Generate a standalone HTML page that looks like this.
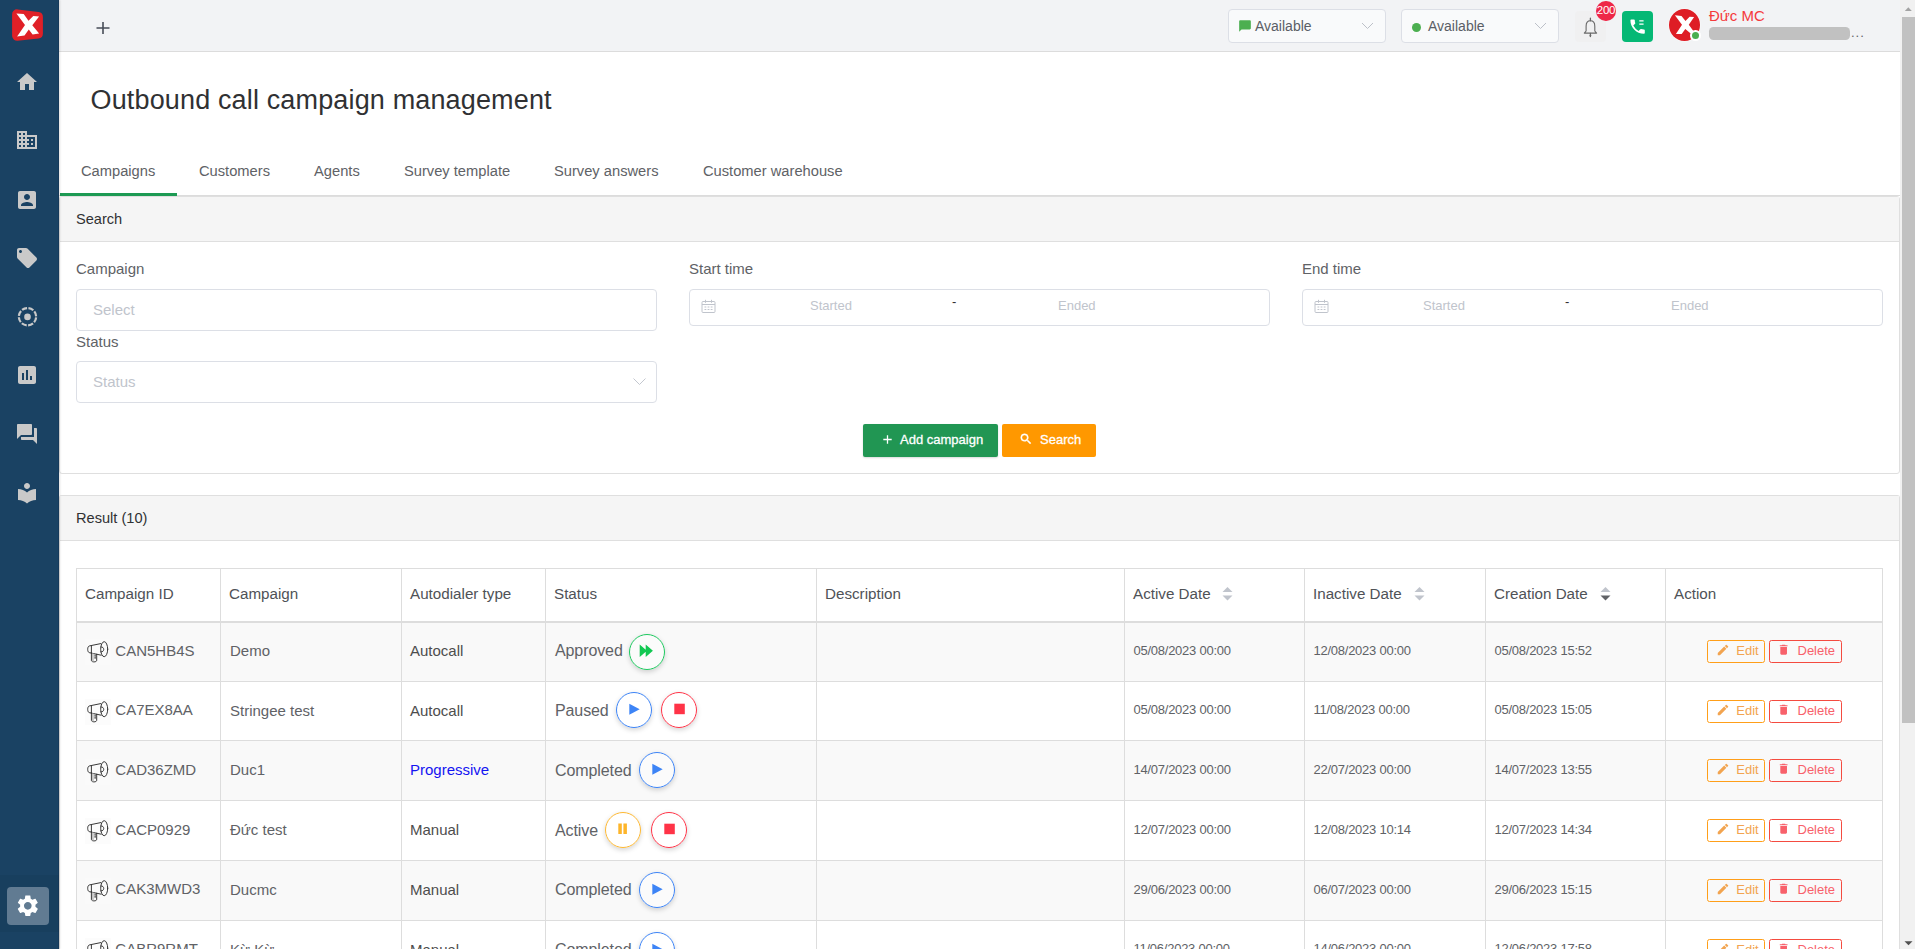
<!DOCTYPE html>
<html><head><meta charset="utf-8">
<style>
*{box-sizing:border-box;margin:0;padding:0}
html,body{width:1915px;height:949px;overflow:hidden;background:#fff;font-family:"Liberation Sans",sans-serif;color:#606266}
.abs{position:absolute}
#side{position:absolute;left:0;top:0;width:59px;height:949px;background:#1a4263;border-right:1px solid #163a5b;box-shadow:1px 0 2px rgba(0,0,0,.13);z-index:5}
#side svg.ic{position:absolute;left:15px;width:24px;height:24px;fill:#c9c9c9}
#top{position:absolute;left:59px;top:0;width:1841px;height:52px;background:#f2f3f5;border-bottom:1px solid #dcdcdc}
.sel{position:absolute;top:9px;height:34px;width:158px;border:1px solid #dcdfe6;border-radius:4px;background:#f9fafb;font-size:14px;color:#5a5e66}
h1{position:absolute;left:90.5px;top:83.5px;font-size:27px;letter-spacing:.15px;font-weight:400;color:#303133;line-height:32px;white-space:nowrap}
.tab{position:absolute;top:162px;font-size:14.7px;line-height:18px;color:#606266;white-space:nowrap}
.card{position:absolute;left:59px;width:1841px;border:1px solid #dfdfdf;border-radius:3px;background:#fff}
.chead{position:absolute;left:0;top:0;right:0;height:45px;background:#f5f5f5;border-bottom:1px solid #dfdfdf;font-size:14.600px;color:#303133;line-height:44px;padding-left:16px}
.lbl{position:absolute;font-size:15px;line-height:18px;color:#606266;white-space:nowrap}
.inp{position:absolute;border:1px solid #dcdfe6;border-radius:4px;background:#fff;font-size:15px;color:#c0c4cc}
.th{position:absolute;top:584px;font-size:15.200px;line-height:20px;color:#4f5257;white-space:nowrap}
.td{position:absolute;font-size:15px;line-height:20px;color:#606266;white-space:nowrap}
.cb{position:absolute;width:36px;height:36px;border-radius:50%;border:1px solid;background:rgba(255,255,255,.35);box-shadow:0 2px 5px rgba(0,0,0,.17)}
.eb{position:absolute;height:23px;border:1px solid;border-radius:2.500px;font-size:13px;line-height:16px;white-space:nowrap}
</style></head><body>
<div id="side">
<svg class="abs" style="left:12px;top:9px" width="32" height="33" viewBox="0 0 32 33"><path d="M5.10 5.35L25.90 7.91L25.90 24.44L5.10 26.80Z" fill="#e02027" stroke="#e02027" stroke-width="10.0" stroke-linejoin="round"/><path d="M4.400 4.400L11.700 5.100L16.500 11.700L21.300 6.900L27.100 7.400L20.300 16.300L27.100 24.600L20.600 25.400L16.800 20.600L12.500 26.600L5.100 27.600L13 16Z" fill="#fff"/></svg>
<svg class="ic" style="top:69.500px" viewBox="0 0 24 24"><path d="M10 20v-6h4v6h5v-8h3L12 3 2 12h3v8z"/></svg>
<svg class="ic" style="top:128.300px" viewBox="0 0 24 24"><path d="M12 7V3H2v18h20V7H12zM6 19H4v-2h2v2zm0-4H4v-2h2v2zm0-4H4V9h2v2zm0-4H4V5h2v2zm4 12H8v-2h2v2zm0-4H8v-2h2v2zm0-4H8V9h2v2zm0-4H8V5h2v2zm10 12h-8v-2h2v-2h-2v-2h2v-2h-2V9h8v10zm-2-8h-2v2h2v-2zm0 4h-2v2h2v-2z"/></svg>
<svg class="ic" style="top:187.500px" viewBox="0 0 24 24"><path d="M3 5v14c0 1.1.89 2 2 2h14c1.1 0 2-.9 2-2V5c0-1.1-.9-2-2-2H5c-1.11 0-2 .9-2 2zm12 4c0 1.66-1.34 3-3 3s-3-1.34-3-3 1.34-3 3-3 3 1.34 3 3zm-9 8c0-2 4-3.1 6-3.1s6 1.1 6 3.1v1H6v-1z"/></svg>
<svg class="ic" style="top:246px" viewBox="0 0 24 24"><path d="M21.41 11.58l-9-9C12.05 2.22 11.55 2 11 2H4c-1.1 0-2 .9-2 2v7c0 .55.22 1.05.59 1.42l9 9c.36.36.86.58 1.41.58.55 0 1.05-.22 1.41-.59l7-7c.37-.36.59-.86.59-1.41 0-.55-.23-1.06-.59-1.42zM5.5 7C4.67 7 4 6.33 4 5.5S4.67 4 5.5 4 7 4.67 7 5.5 6.33 7 5.5 7z"/></svg>
<svg class="ic" style="top:304.500px" viewBox="0 0 24 24"><circle cx="12.500" cy="11.700" r="8.650" fill="none" stroke="#c9c9c9" stroke-width="2.200" stroke-dasharray="5.350 1.443" stroke-dashoffset="6.070"/><circle cx="12.500" cy="11.900" r="3.300"/></svg>
<svg class="ic" style="top:363px" viewBox="0 0 24 24"><path d="M19 3H5c-1.1 0-2 .9-2 2v14c0 1.1.9 2 2 2h14c1.1 0 2-.9 2-2V5c0-1.1-.9-2-2-2zM9 17H7v-7h2v7zm4 0h-2V7h2v10zm4 0h-2v-4h2v4z"/></svg>
<svg class="ic" style="top:422px" viewBox="0 0 24 24"><path d="M21 6h-2v9H6v2c0 .55.45 1 1 1h11l4 4V7c0-.55-.45-1-1-1zm-4 6V3c0-.55-.45-1-1-1H3c-.55 0-1 .45-1 1v14l4-4h10c.55 0 1-.45 1-1z"/></svg>
<svg class="ic" style="top:481px" viewBox="0 0 24 24"><path d="M12 11.55C9.64 9.35 6.48 8 3 8v11c3.48 0 6.64 1.35 9 3.55 2.36-2.19 5.52-3.55 9-3.55V8c-3.48 0-6.64 1.35-9 3.55zM12 8c1.66 0 3-1.34 3-3s-1.34-3-3-3-3 1.34-3 3 1.34 3 3 3z"/></svg>
<div class="abs" style="left:0;top:875px;width:59px;height:57px;background:rgba(0,0,0,.045)"></div><div class="abs" style="left:7px;top:887px;width:42px;height:38px;border-radius:4px;background:#617b92"></div>
<svg class="ic" style="top:892.600px;left:14.900px;width:25.600px;height:25.600px;fill:#fff" viewBox="0 0 24 24"><path d="M19.14 12.94c.04-.3.06-.61.06-.94 0-.32-.02-.64-.07-.94l2.03-1.58c.18-.14.23-.41.12-.61l-1.92-3.32c-.12-.22-.37-.29-.59-.22l-2.39.96c-.5-.38-1.03-.7-1.62-.94l-.36-2.54c-.04-.24-.24-.41-.48-.41h-3.84c-.24 0-.43.17-.47.41l-.36 2.54c-.59.24-1.13.57-1.62.94l-2.39-.96c-.22-.08-.47 0-.59.22L2.74 8.87c-.12.21-.08.47.12.61l2.03 1.58c-.05.3-.09.63-.09.94s.02.64.07.94l-2.03 1.58c-.18.14-.23.41-.12.61l1.92 3.32c.12.22.37.29.59.22l2.39-.96c.5.38 1.03.7 1.62.94l.36 2.54c.05.24.24.41.48.41h3.84c.24 0 .44-.17.47-.41l.36-2.54c.59-.24 1.13-.56 1.62-.94l2.39.96c.22.08.47 0 .59-.22l1.92-3.32c.12-.22.07-.47-.12-.61l-2.01-1.58zM12 15.6c-1.98 0-3.6-1.62-3.6-3.6s1.62-3.6 3.6-3.6 3.6 1.62 3.6 3.6-1.62 3.6-3.6 3.6z"/></svg>
</div>
<div id="top">
<svg class="abs" style="left:36.600px;top:21px" width="14" height="14" viewBox="0 0 14 14"><path d="M7 1.100v12M.5 7h13" stroke="#474c57" stroke-width="1.600" fill="none"/></svg>
<div class="sel" style="left:1169px"><svg class="abs" style="left:9px;top:9px" width="14" height="14" viewBox="0 0 24 24"><path d="M20 2H4c-1.1 0-2 .9-2 2v18l4-4h14c1.1 0 2-.9 2-2V4c0-1.1-.9-2-2-2z" fill="#4caf50"/></svg><span class="abs" style="left:26px;top:7px;line-height:18px">Available</span><svg class="abs" style="left:131.700px;top:9px" width="13" height="13" viewBox="0 0 13 13"><path d="M1 4l5.500 5.500 5.500-5.500" stroke="#bcc0c8" stroke-width="1" fill="none"/></svg></div>
<div class="sel" style="left:1342px"><div class="abs" style="left:10px;top:13px;width:9px;height:9px;border-radius:50%;background:#4caf50"></div><span class="abs" style="left:26px;top:7px;line-height:18px">Available</span><svg class="abs" style="left:131.700px;top:9px" width="13" height="13" viewBox="0 0 13 13"><path d="M1 4l5.500 5.500 5.500-5.500" stroke="#bcc0c8" stroke-width="1" fill="none"/></svg></div>
<div class="abs" style="left:1516px;top:11px;width:31px;height:31px;border-radius:4px;background:#f0f0f1"></div>
<svg class="abs" style="left:1516px;top:11.500px" width="31" height="31" viewBox="0 0 31 31"><path d="M9.300 21.100L11.100 19V14.200C11.100 10.600 13 8.800 15.400 8.800S19.800 10.600 19.800 14.200V19L21.600 21.100Z" fill="none" stroke="#686868" stroke-width="1.100" stroke-linejoin="round"/><path d="M15.400 6.200v2.600M15.400 21.500v3" stroke="#686868" stroke-width="1.300" stroke-linecap="round"/><path d="M14.200 23.300h2.400l-1.200 1.600z" fill="#686868"/></svg>
<div class="abs" style="left:1537px;top:1px;width:19.500px;height:20px;border-radius:50%;background:#ee2748"></div>
<div class="abs" style="left:1536px;top:1.500px;width:22px;height:17.500px;color:#fff;font-size:11.500px;line-height:17.500px;text-align:center;letter-spacing:-.2px">200</div>
<div class="abs" style="left:1563px;top:11px;width:31px;height:31px;border-radius:4px;background:#05b875"></div>
<svg class="abs" style="left:1569.200px;top:17.400px" width="19.200" height="19.200" viewBox="0 0 24 24"><path fill="#fff" d="M20 15.500c-1.250 0-2.450-.2-3.570-.57a1.020 1.020 0 0 0-1.020.24l-2.200 2.200a15.045 15.045 0 0 1-6.590-6.590l2.200-2.210a.96.960 0 0 0 .25-1A11.360 11.360 0 0 1 8.500 4c0-.55-.45-1-1-1H4c-.55 0-1 .45-1 1 0 9.390 7.610 17 17 17 .55 0 1-.45 1-1v-3.500c0-.55-.45-1-1-1zM14.100 4.200h5.400v1.500h-5.400zM14.100 8.200h5.400v1.500h-5.400z"/></svg>
<div class="abs" style="left:1610.100px;top:8.800px;width:30.800px;height:32.100px;border-radius:50%;background:#de1d25;box-shadow:0 0 0 .6px rgba(255,255,255,.6)"></div>
<svg class="abs" style="left:1610px;top:8px" width="32" height="34" viewBox="0 0 32 34"><path d="M5.900 7.200L12.500 7.900L16.500 13L20.600 8.700L25.100 8.900L19.800 16.800L26 25.300L21.100 24.900L16.300 21.100L12.700 25.900L6.900 26.100L13 16.800Z" fill="#fff"/></svg>
<div class="abs" style="left:1631.300px;top:30.100px;width:10.600px;height:10.600px;border-radius:50%;background:#fff"></div><div class="abs" style="left:1632.950px;top:31.750px;width:7.300px;height:7.300px;border-radius:50%;background:#4caf50"></div>
<div class="abs" style="left:1650px;top:7px;font-size:15px;line-height:18px;color:#f53a3c;white-space:nowrap">Đức MC</div>
<div class="abs" style="left:1650px;top:27px;width:140.500px;height:13px;border-radius:4.500px;background:#c1c1c1"></div>
<div class="abs" style="left:1792px;top:24.200px;font-size:13px;line-height:18px;color:#606266;letter-spacing:1px">...</div>
</div>
<h1>Outbound call campaign management</h1>
<div class="tab" style="left:81px">Campaigns</div>
<div class="tab" style="left:199px">Customers</div>
<div class="tab" style="left:314px">Agents</div>
<div class="tab" style="left:404px">Survey template</div>
<div class="tab" style="left:554px">Survey answers</div>
<div class="tab" style="left:703px">Customer warehouse</div>
<div class="abs" style="left:59px;top:195px;width:1841px;height:1px;background:#dcdcdc"></div>
<div class="abs" style="left:59.500px;top:193px;width:117px;height:3px;background:#1d9a53"></div>
<div class="card" style="top:196px;height:278px">
<div class="chead">Search</div>
<div class="abs" style="left:1px;top:0;width:0;height:0">
<div class="lbl" style="left:15px;top:62.500px">Campaign</div>
<div class="inp" style="left:15px;top:92px;width:581px;height:42px"><span class="abs" style="left:16px;top:10.500px;line-height:18px">Select</span></div>
<div class="lbl" style="left:15px;top:135.500px">Status</div>
<div class="inp" style="left:15px;top:164px;width:581px;height:42px"><span class="abs" style="left:16px;top:10.500px;line-height:18px">Status</span><svg class="abs" style="left:555.500px;top:13.300px" width="13" height="13" viewBox="0 0 13 13"><path d="M.5 3.500l6 6 6-6" stroke="#c0c4cc" stroke-width=".95" fill="none"/></svg></div>
<div class="lbl" style="left:628px;top:63px">Start time</div>
<div class="inp dr" style="left:628px;top:92px;width:581px;height:37px"><svg class="abs" style="left:11px;top:8.500px" width="15" height="15" viewBox="0 0 15 15"><g fill="none" stroke="#c0c4cc" stroke-width="1"><rect x="1" y="2.500" width="13" height="11" rx="1"/><path d="M1 5.500h13M4.500 .800v3M10.500 .800v3"/></g><path d="M3.500 7.500h1.800v1h-1.800zM6.600 7.500h1.800v1h-1.800zM9.700 7.500h1.800v1h-1.800zM3.500 10h1.800v1h-1.800zM6.600 10h1.800v1h-1.800zM9.700 10h1.800v1h-1.800z" fill="#c0c4cc"/></svg><span class="abs" style="left:120px;top:8px;line-height:16px;font-size:13px">Started</span><span class="abs" style="left:262px;top:4px;line-height:16px;font-size:13px;color:#303133">-</span><span class="abs" style="left:368px;top:8px;line-height:16px;font-size:13px">Ended</span></div>
<div class="lbl" style="left:1241px;top:63px">End time</div>
<div class="inp dr" style="left:1241px;top:92px;width:581px;height:37px"><svg class="abs" style="left:11px;top:8.500px" width="15" height="15" viewBox="0 0 15 15"><g fill="none" stroke="#c0c4cc" stroke-width="1"><rect x="1" y="2.500" width="13" height="11" rx="1"/><path d="M1 5.500h13M4.500 .800v3M10.500 .800v3"/></g><path d="M3.500 7.500h1.800v1h-1.800zM6.600 7.500h1.800v1h-1.800zM9.700 7.500h1.800v1h-1.800zM3.500 10h1.800v1h-1.800zM6.600 10h1.800v1h-1.800zM9.700 10h1.800v1h-1.800z" fill="#c0c4cc"/></svg><span class="abs" style="left:120px;top:8px;line-height:16px;font-size:13px">Started</span><span class="abs" style="left:262px;top:4px;line-height:16px;font-size:13px;color:#303133">-</span><span class="abs" style="left:368px;top:8px;line-height:16px;font-size:13px">Ended</span></div>
<div class="abs" style="left:802px;top:227px;width:135px;height:33px;background:#219653;border-radius:2px;color:#fff;font-size:13px;line-height:32px;white-space:nowrap;box-shadow:0 1px 2px rgba(0,0,0,.15);-webkit-text-stroke:.3px #fff"><svg class="abs" style="left:20px;top:10.800px" width="9" height="9" viewBox="0 0 9 9"><path d="M4.500 .3v8.400M.3 4.500h8.400" stroke="#fff" stroke-width="1.300" fill="none"/></svg><span class="abs" style="left:37px;top:-.5px">Add campaign</span></div>
<div class="abs" style="left:941px;top:227px;width:94px;height:33px;background:#ff9800;border-radius:2px;color:#fff;font-size:13px;line-height:32px;white-space:nowrap;-webkit-text-stroke:.3px #fff"><svg class="abs" style="left:16.500px;top:8px" width="14" height="14" viewBox="0 0 24 24"><path fill="#fff" stroke="#fff" stroke-width=".8" d="M15.500 14h-.79l-.28-.27A6.470 6.470 0 0 0 16 9.500 6.500 6.500 0 1 0 9.500 16c1.610 0 3.090-.59 4.230-1.570l.27.28v.79l5 4.990L20.490 19l-4.990-5zm-6 0C7.010 14 5 11.990 5 9.500S7.010 5 9.500 5 14 7.010 14 9.500 11.990 14 9.500 14z"/></svg><span class="abs" style="left:38px;top:-.5px">Search</span></div>
</div>
</div>
<div class="card" style="top:495px;height:470px;border-bottom:0">
<div class="chead">Result (10)</div>
<div class="abs" style="left:1px;top:0;width:0;height:0">

</div>
</div>
<!--TBL-->
<div class="abs" style="left:76px;top:568px;width:1807px;height:1px;background:#dddddd"></div>
<div class="abs" style="left:76px;top:621px;width:1807px;height:2px;background:#dddddd"></div>
<div class="abs" style="left:77px;top:623px;width:1805px;height:58px;background:#f9f9f9"></div>
<div class="abs" style="left:76px;top:681px;width:1807px;height:1px;background:#dddddd"></div>
<div class="abs" style="left:76px;top:740px;width:1807px;height:1px;background:#dddddd"></div>
<div class="abs" style="left:77px;top:741px;width:1805px;height:59px;background:#f9f9f9"></div>
<div class="abs" style="left:76px;top:800px;width:1807px;height:1px;background:#dddddd"></div>
<div class="abs" style="left:76px;top:860px;width:1807px;height:1px;background:#dddddd"></div>
<div class="abs" style="left:77px;top:861px;width:1805px;height:59px;background:#f9f9f9"></div>
<div class="abs" style="left:76px;top:920px;width:1807px;height:1px;background:#dddddd"></div>
<div class="abs" style="left:76px;top:980px;width:1807px;height:1px;background:#dddddd"></div>
<div class="abs" style="left:76px;top:568px;width:1px;height:400px;background:#dddddd"></div>
<div class="abs" style="left:220px;top:568px;width:1px;height:400px;background:#dddddd"></div>
<div class="abs" style="left:401px;top:568px;width:1px;height:400px;background:#dddddd"></div>
<div class="abs" style="left:545px;top:568px;width:1px;height:400px;background:#dddddd"></div>
<div class="abs" style="left:816px;top:568px;width:1px;height:400px;background:#dddddd"></div>
<div class="abs" style="left:1124px;top:568px;width:1px;height:400px;background:#dddddd"></div>
<div class="abs" style="left:1304px;top:568px;width:1px;height:400px;background:#dddddd"></div>
<div class="abs" style="left:1485px;top:568px;width:1px;height:400px;background:#dddddd"></div>
<div class="abs" style="left:1665px;top:568px;width:1px;height:400px;background:#dddddd"></div>
<div class="abs" style="left:1882px;top:568px;width:1px;height:400px;background:#dddddd"></div>
<div class="th" style="left:85px">Campaign ID</div>
<div class="th" style="left:229px">Campaign</div>
<div class="th" style="left:410px">Autodialer type</div>
<div class="th" style="left:554px">Status</div>
<div class="th" style="left:825px">Description</div>
<div class="th" style="left:1133px">Active Date</div>
<div class="th" style="left:1313px">Inactive Date</div>
<div class="th" style="left:1494px">Creation Date</div>
<div class="th" style="left:1674px">Action</div>
<svg class="abs" style="left:1221.5px;top:587px" width="11" height="14" viewBox="0 0 11 14"><path d="M.5 5L5.5 0l5 5z" fill="#c0c4cc"/><path d="M.5 8.500L5.500 13.500l5-5z" fill="#c0c4cc"/></svg>
<svg class="abs" style="left:1413.5px;top:587px" width="11" height="14" viewBox="0 0 11 14"><path d="M.5 5L5.5 0l5 5z" fill="#c0c4cc"/><path d="M.5 8.500L5.500 13.500l5-5z" fill="#c0c4cc"/></svg>
<svg class="abs" style="left:1599.5px;top:587px" width="11" height="14" viewBox="0 0 11 14"><path d="M.5 5L5.5 0l5 5z" fill="#c0c4cc"/><path d="M.5 8.500L5.500 13.500l5-5z" fill="#606266"/></svg>
<svg class="abs" style="left:85px;top:639px" width="26" height="26" viewBox="0 0 26 26"><rect width="26" height="26" fill="#fbfbfb" opacity=".7"/><g fill="none" stroke="#2e2e2e" stroke-width=".95" stroke-linejoin="round" stroke-linecap="round"><ellipse cx="19.2" cy="10.2" rx="3.5" ry="7.5"/><path d="M15.9 7.9c3.9-.5 3.9 5.500 0 5"/><path d="M15.8 4.600L6.400 6.500L4.200 7C2.200 7.600 2.200 13 4.200 13.600L6.400 14.100L16.200 16.200"/><path d="M6.400 6.500v7.600"/><path d="M6.400 14.100v7.300c0 2 5.300 2 5.300 0v-6.200"/><path d="M10.100 16v.8M10.100 17.800v1.400" stroke-width="1.100"/></g><path d="M7 14.500h1.800v7.800H7z" fill="#c4c4c4"/></svg>
<div class="td" style="left:115.300px;top:640.75px">CAN5HB4S</div>
<div class="td" style="left:230px;top:640.75px">Demo</div>
<div class="td" style="left:410px;top:640.75px;color:#4d4d4d">Autocall</div>
<div class="td" style="left:555px;top:640.75px;font-size:16px;letter-spacing:-.1px">Approved</div>
<div class="cb" style="left:629.0px;top:633.9px;border-color:#1ec95f"></div><svg class="abs" style="left:629.0px;top:633.9px" width="36" height="36" viewBox="0 0 36 36"><path d="M10.700 10.400l7.200 6.250-7.200 6.250zM16.700 10.400l7.200 6.250-7.200 6.250z" fill="#12c852"/></svg>
<div class="td" style="left:1133.5px;top:640.75px;font-size:13px;letter-spacing:-.25px">05/08/2023 00:00</div>
<div class="td" style="left:1313.5px;top:640.75px;font-size:13px;letter-spacing:-.25px">12/08/2023 00:00</div>
<div class="td" style="left:1494.5px;top:640.75px;font-size:13px;letter-spacing:-.25px">05/08/2023 15:52</div>
<div class="eb" style="left:1707px;top:640px;width:58px;border-color:#ff9f19;color:#f2a450"><svg class="abs" style="left:7.750px;top:2.150px" width="14" height="14" viewBox="0 0 24 24"><path fill="#f2a450" d="M3 17.250V21h3.750L17.810 9.940l-3.750-3.750L3 17.250zM20.710 7.040a.996.996 0 0 0 0-1.410l-2.340-2.340a.996.996 0 0 0-1.410 0l-1.830 1.830 3.750 3.750 1.830-1.830z"/></svg><span class="abs" style="left:28.300px;top:2px">Edit</span></div>
<div class="eb" style="left:1769px;top:640px;width:73px;border-color:#f44b40;color:#f8616b"><svg class="abs" style="left:7.200px;top:2.200px" width="13.300" height="13.300" viewBox="0 0 24 24"><path fill="#f8616b" d="M6 19c0 1.100.900 2 2 2h8c1.100 0 2-.900 2-2V7H6v12zM19 4h-3.500l-1-1h-5l-1 1H5v2h14V4z"/></svg><span class="abs" style="left:27.500px;top:2px">Delete</span></div>
<svg class="abs" style="left:85px;top:698.5px" width="26" height="26" viewBox="0 0 26 26"><rect width="26" height="26" fill="#fbfbfb" opacity=".7"/><g fill="none" stroke="#2e2e2e" stroke-width=".95" stroke-linejoin="round" stroke-linecap="round"><ellipse cx="19.2" cy="10.2" rx="3.5" ry="7.5"/><path d="M15.9 7.9c3.9-.5 3.9 5.500 0 5"/><path d="M15.8 4.600L6.400 6.500L4.200 7C2.200 7.600 2.200 13 4.200 13.600L6.400 14.100L16.200 16.200"/><path d="M6.400 6.500v7.600"/><path d="M6.400 14.100v7.300c0 2 5.300 2 5.300 0v-6.200"/><path d="M10.100 16v.8M10.100 17.800v1.400" stroke-width="1.100"/></g><path d="M7 14.500h1.800v7.800H7z" fill="#c4c4c4"/></svg>
<div class="td" style="left:115.300px;top:699.75px">CA7EX8AA</div>
<div class="td" style="left:230px;top:700.75px">Stringee test</div>
<div class="td" style="left:410px;top:700.75px;color:#4d4d4d">Autocall</div>
<div class="td" style="left:555px;top:700.75px;font-size:16px;letter-spacing:-.1px">Paused</div>
<div class="cb" style="left:616.0px;top:692.4px;border-color:#3d84f6"></div><svg class="abs" style="left:616.0px;top:692.4px" width="36" height="36" viewBox="0 0 36 36"><path d="M13.3 11.7l10.4 5.5-10.4 5.5z" fill="#3d84f6"/></svg>
<div class="cb" style="left:661.0px;top:692.4px;border-color:#ff3347"></div><svg class="abs" style="left:661.0px;top:692.4px" width="36" height="36" viewBox="0 0 36 36"><rect x="13.3" y="11.7" width="10.5" height="10.5" fill="#ff3347"/></svg>
<div class="td" style="left:1133.5px;top:699.75px;font-size:13px;letter-spacing:-.25px">05/08/2023 00:00</div>
<div class="td" style="left:1313.5px;top:699.75px;font-size:13px;letter-spacing:-.25px">11/08/2023 00:00</div>
<div class="td" style="left:1494.5px;top:699.75px;font-size:13px;letter-spacing:-.25px">05/08/2023 15:05</div>
<div class="eb" style="left:1707px;top:700px;width:58px;border-color:#ff9f19;color:#f2a450"><svg class="abs" style="left:7.750px;top:2.150px" width="14" height="14" viewBox="0 0 24 24"><path fill="#f2a450" d="M3 17.250V21h3.750L17.810 9.940l-3.750-3.750L3 17.250zM20.710 7.040a.996.996 0 0 0 0-1.410l-2.340-2.340a.996.996 0 0 0-1.410 0l-1.830 1.830 3.750 3.750 1.830-1.830z"/></svg><span class="abs" style="left:28.300px;top:2px">Edit</span></div>
<div class="eb" style="left:1769px;top:700px;width:73px;border-color:#f44b40;color:#f8616b"><svg class="abs" style="left:7.200px;top:2.200px" width="13.300" height="13.300" viewBox="0 0 24 24"><path fill="#f8616b" d="M6 19c0 1.100.900 2 2 2h8c1.100 0 2-.900 2-2V7H6v12zM19 4h-3.500l-1-1h-5l-1 1H5v2h14V4z"/></svg><span class="abs" style="left:27.500px;top:2px">Delete</span></div>
<svg class="abs" style="left:85px;top:758.5px" width="26" height="26" viewBox="0 0 26 26"><rect width="26" height="26" fill="#fbfbfb" opacity=".7"/><g fill="none" stroke="#2e2e2e" stroke-width=".95" stroke-linejoin="round" stroke-linecap="round"><ellipse cx="19.2" cy="10.2" rx="3.5" ry="7.5"/><path d="M15.9 7.9c3.9-.5 3.9 5.500 0 5"/><path d="M15.8 4.600L6.400 6.500L4.200 7C2.200 7.600 2.200 13 4.200 13.600L6.400 14.100L16.200 16.200"/><path d="M6.400 6.500v7.600"/><path d="M6.400 14.100v7.300c0 2 5.300 2 5.300 0v-6.200"/><path d="M10.100 16v.8M10.100 17.800v1.400" stroke-width="1.100"/></g><path d="M7 14.500h1.800v7.800H7z" fill="#c4c4c4"/></svg>
<div class="td" style="left:115.300px;top:759.75px">CAD36ZMD</div>
<div class="td" style="left:230px;top:759.75px">Duc1</div>
<div class="td" style="left:410px;top:759.75px;color:#1414f2">Progressive</div>
<div class="td" style="left:555px;top:760.75px;font-size:16px;letter-spacing:-.1px">Completed</div>
<div class="cb" style="left:639.0px;top:752.0px;border-color:#3d84f6"></div><svg class="abs" style="left:639.0px;top:752.0px" width="36" height="36" viewBox="0 0 36 36"><path d="M13.3 11.7l10.4 5.5-10.4 5.5z" fill="#3d84f6"/></svg>
<div class="td" style="left:1133.5px;top:759.75px;font-size:13px;letter-spacing:-.25px">14/07/2023 00:00</div>
<div class="td" style="left:1313.5px;top:759.75px;font-size:13px;letter-spacing:-.25px">22/07/2023 00:00</div>
<div class="td" style="left:1494.5px;top:759.75px;font-size:13px;letter-spacing:-.25px">14/07/2023 13:55</div>
<div class="eb" style="left:1707px;top:759px;width:58px;border-color:#ff9f19;color:#f2a450"><svg class="abs" style="left:7.750px;top:2.150px" width="14" height="14" viewBox="0 0 24 24"><path fill="#f2a450" d="M3 17.250V21h3.750L17.810 9.940l-3.750-3.750L3 17.250zM20.710 7.040a.996.996 0 0 0 0-1.410l-2.340-2.340a.996.996 0 0 0-1.410 0l-1.830 1.830 3.750 3.750 1.830-1.830z"/></svg><span class="abs" style="left:28.300px;top:2px">Edit</span></div>
<div class="eb" style="left:1769px;top:759px;width:73px;border-color:#f44b40;color:#f8616b"><svg class="abs" style="left:7.200px;top:2.200px" width="13.300" height="13.300" viewBox="0 0 24 24"><path fill="#f8616b" d="M6 19c0 1.100.900 2 2 2h8c1.100 0 2-.900 2-2V7H6v12zM19 4h-3.500l-1-1h-5l-1 1H5v2h14V4z"/></svg><span class="abs" style="left:27.500px;top:2px">Delete</span></div>
<svg class="abs" style="left:85px;top:818px" width="26" height="26" viewBox="0 0 26 26"><rect width="26" height="26" fill="#fbfbfb" opacity=".7"/><g fill="none" stroke="#2e2e2e" stroke-width=".95" stroke-linejoin="round" stroke-linecap="round"><ellipse cx="19.2" cy="10.2" rx="3.5" ry="7.5"/><path d="M15.9 7.9c3.9-.5 3.9 5.500 0 5"/><path d="M15.8 4.600L6.400 6.500L4.200 7C2.200 7.600 2.200 13 4.200 13.600L6.400 14.100L16.200 16.200"/><path d="M6.400 6.500v7.600"/><path d="M6.400 14.100v7.300c0 2 5.300 2 5.300 0v-6.200"/><path d="M10.100 16v.8M10.100 17.800v1.400" stroke-width="1.100"/></g><path d="M7 14.500h1.800v7.800H7z" fill="#c4c4c4"/></svg>
<div class="td" style="left:115.300px;top:819.75px">CACP0929</div>
<div class="td" style="left:230px;top:819.75px">Đức test</div>
<div class="td" style="left:410px;top:819.75px;color:#4d4d4d">Manual</div>
<div class="td" style="left:555px;top:820.75px;font-size:16px;letter-spacing:-.1px">Active</div>
<div class="cb" style="left:605.0px;top:811.9px;border-color:#fdb833"></div><svg class="abs" style="left:605.0px;top:811.9px" width="36" height="36" viewBox="0 0 36 36"><path d="M13.3 11.4h3.5v10.7h-3.5zM18.4 11.4h3.5v10.7h-3.5z" fill="#fdb52a"/></svg>
<div class="cb" style="left:650.5px;top:811.9px;border-color:#ff3347"></div><svg class="abs" style="left:650.5px;top:811.9px" width="36" height="36" viewBox="0 0 36 36"><rect x="13.3" y="11.7" width="10.5" height="10.5" fill="#ff3347"/></svg>
<div class="td" style="left:1133.5px;top:819.75px;font-size:13px;letter-spacing:-.25px">12/07/2023 00:00</div>
<div class="td" style="left:1313.5px;top:819.75px;font-size:13px;letter-spacing:-.25px">12/08/2023 10:14</div>
<div class="td" style="left:1494.5px;top:819.75px;font-size:13px;letter-spacing:-.25px">12/07/2023 14:34</div>
<div class="eb" style="left:1707px;top:819px;width:58px;border-color:#ff9f19;color:#f2a450"><svg class="abs" style="left:7.750px;top:2.150px" width="14" height="14" viewBox="0 0 24 24"><path fill="#f2a450" d="M3 17.250V21h3.750L17.810 9.940l-3.750-3.750L3 17.250zM20.710 7.040a.996.996 0 0 0 0-1.410l-2.340-2.340a.996.996 0 0 0-1.410 0l-1.830 1.830 3.750 3.750 1.830-1.830z"/></svg><span class="abs" style="left:28.300px;top:2px">Edit</span></div>
<div class="eb" style="left:1769px;top:819px;width:73px;border-color:#f44b40;color:#f8616b"><svg class="abs" style="left:7.200px;top:2.200px" width="13.300" height="13.300" viewBox="0 0 24 24"><path fill="#f8616b" d="M6 19c0 1.100.900 2 2 2h8c1.100 0 2-.900 2-2V7H6v12zM19 4h-3.500l-1-1h-5l-1 1H5v2h14V4z"/></svg><span class="abs" style="left:27.500px;top:2px">Delete</span></div>
<svg class="abs" style="left:85px;top:878px" width="26" height="26" viewBox="0 0 26 26"><rect width="26" height="26" fill="#fbfbfb" opacity=".7"/><g fill="none" stroke="#2e2e2e" stroke-width=".95" stroke-linejoin="round" stroke-linecap="round"><ellipse cx="19.2" cy="10.2" rx="3.5" ry="7.5"/><path d="M15.9 7.9c3.9-.5 3.9 5.500 0 5"/><path d="M15.8 4.600L6.400 6.500L4.200 7C2.200 7.600 2.200 13 4.200 13.600L6.400 14.100L16.200 16.200"/><path d="M6.400 6.500v7.600"/><path d="M6.400 14.100v7.300c0 2 5.300 2 5.300 0v-6.200"/><path d="M10.100 16v.8M10.100 17.800v1.400" stroke-width="1.100"/></g><path d="M7 14.500h1.800v7.800H7z" fill="#c4c4c4"/></svg>
<div class="td" style="left:115.300px;top:878.75px">CAK3MWD3</div>
<div class="td" style="left:230px;top:879.75px">Ducmc</div>
<div class="td" style="left:410px;top:879.75px;color:#4d4d4d">Manual</div>
<div class="td" style="left:555px;top:879.75px;font-size:16px;letter-spacing:-.1px">Completed</div>
<div class="cb" style="left:639.0px;top:872.0px;border-color:#3d84f6"></div><svg class="abs" style="left:639.0px;top:872.0px" width="36" height="36" viewBox="0 0 36 36"><path d="M13.3 11.7l10.4 5.5-10.4 5.5z" fill="#3d84f6"/></svg>
<div class="td" style="left:1133.5px;top:879.75px;font-size:13px;letter-spacing:-.25px">29/06/2023 00:00</div>
<div class="td" style="left:1313.5px;top:879.75px;font-size:13px;letter-spacing:-.25px">06/07/2023 00:00</div>
<div class="td" style="left:1494.5px;top:879.75px;font-size:13px;letter-spacing:-.25px">29/06/2023 15:15</div>
<div class="eb" style="left:1707px;top:879px;width:58px;border-color:#ff9f19;color:#f2a450"><svg class="abs" style="left:7.750px;top:2.150px" width="14" height="14" viewBox="0 0 24 24"><path fill="#f2a450" d="M3 17.250V21h3.750L17.810 9.940l-3.750-3.750L3 17.250zM20.710 7.040a.996.996 0 0 0 0-1.410l-2.340-2.340a.996.996 0 0 0-1.410 0l-1.830 1.830 3.750 3.750 1.830-1.830z"/></svg><span class="abs" style="left:28.300px;top:2px">Edit</span></div>
<div class="eb" style="left:1769px;top:879px;width:73px;border-color:#f44b40;color:#f8616b"><svg class="abs" style="left:7.200px;top:2.200px" width="13.300" height="13.300" viewBox="0 0 24 24"><path fill="#f8616b" d="M6 19c0 1.100.900 2 2 2h8c1.100 0 2-.900 2-2V7H6v12zM19 4h-3.500l-1-1h-5l-1 1H5v2h14V4z"/></svg><span class="abs" style="left:27.500px;top:2px">Delete</span></div>
<svg class="abs" style="left:85px;top:937.5px" width="26" height="26" viewBox="0 0 26 26"><rect width="26" height="26" fill="#fbfbfb" opacity=".7"/><g fill="none" stroke="#2e2e2e" stroke-width=".95" stroke-linejoin="round" stroke-linecap="round"><ellipse cx="19.2" cy="10.2" rx="3.5" ry="7.5"/><path d="M15.9 7.9c3.9-.5 3.9 5.500 0 5"/><path d="M15.8 4.600L6.400 6.500L4.200 7C2.200 7.600 2.200 13 4.200 13.600L6.400 14.100L16.200 16.200"/><path d="M6.400 6.500v7.600"/><path d="M6.400 14.100v7.300c0 2 5.300 2 5.300 0v-6.200"/><path d="M10.100 16v.8M10.100 17.800v1.400" stroke-width="1.100"/></g><path d="M7 14.500h1.800v7.800H7z" fill="#c4c4c4"/></svg>
<div class="td" style="left:115.300px;top:938.75px">CABR9RMT</div>
<div class="td" style="left:230px;top:939.75px">Kừ Kừ</div>
<div class="td" style="left:410px;top:939.75px;color:#4d4d4d">Manual</div>
<div class="td" style="left:555px;top:939.75px;font-size:16px;letter-spacing:-.1px">Completed</div>
<div class="cb" style="left:639.0px;top:931.8px;border-color:#3d84f6"></div><svg class="abs" style="left:639.0px;top:931.8px" width="36" height="36" viewBox="0 0 36 36"><path d="M13.3 11.7l10.4 5.5-10.4 5.5z" fill="#3d84f6"/></svg>
<div class="td" style="left:1133.5px;top:938.75px;font-size:13px;letter-spacing:-.25px">11/06/2023 00:00</div>
<div class="td" style="left:1313.5px;top:938.75px;font-size:13px;letter-spacing:-.25px">14/06/2023 00:00</div>
<div class="td" style="left:1494.5px;top:938.75px;font-size:13px;letter-spacing:-.25px">12/06/2023 17:58</div>
<div class="eb" style="left:1707px;top:939px;width:58px;border-color:#ff9f19;color:#f2a450"><svg class="abs" style="left:7.750px;top:2.150px" width="14" height="14" viewBox="0 0 24 24"><path fill="#f2a450" d="M3 17.250V21h3.750L17.810 9.940l-3.750-3.750L3 17.250zM20.710 7.040a.996.996 0 0 0 0-1.410l-2.340-2.340a.996.996 0 0 0-1.410 0l-1.830 1.830 3.750 3.750 1.830-1.830z"/></svg><span class="abs" style="left:28.300px;top:2px">Edit</span></div>
<div class="eb" style="left:1769px;top:939px;width:73px;border-color:#f44b40;color:#f8616b"><svg class="abs" style="left:7.200px;top:2.200px" width="13.300" height="13.300" viewBox="0 0 24 24"><path fill="#f8616b" d="M6 19c0 1.100.900 2 2 2h8c1.100 0 2-.900 2-2V7H6v12zM19 4h-3.500l-1-1h-5l-1 1H5v2h14V4z"/></svg><span class="abs" style="left:27.500px;top:2px">Delete</span></div>
<!--/TBL-->
<div class="abs" style="left:1900px;top:0;width:15px;height:949px;background:#f1f1f1"></div>
<div class="abs" style="left:1902px;top:17px;width:13px;height:706px;background:#c1c1c1"></div>
<svg class="abs" style="left:1900px;top:0" width="15" height="17" viewBox="0 0 15 17"><path d="M4.800 11L8.300 7.200 11.800 11z" fill="#a3a3a3"/></svg>
<svg class="abs" style="left:1900px;top:932px" width="15" height="17" viewBox="0 0 15 17"><path d="M4.500 9.300L8.500 13.300 12.500 9.300z" fill="#505050"/></svg>

</body></html>
